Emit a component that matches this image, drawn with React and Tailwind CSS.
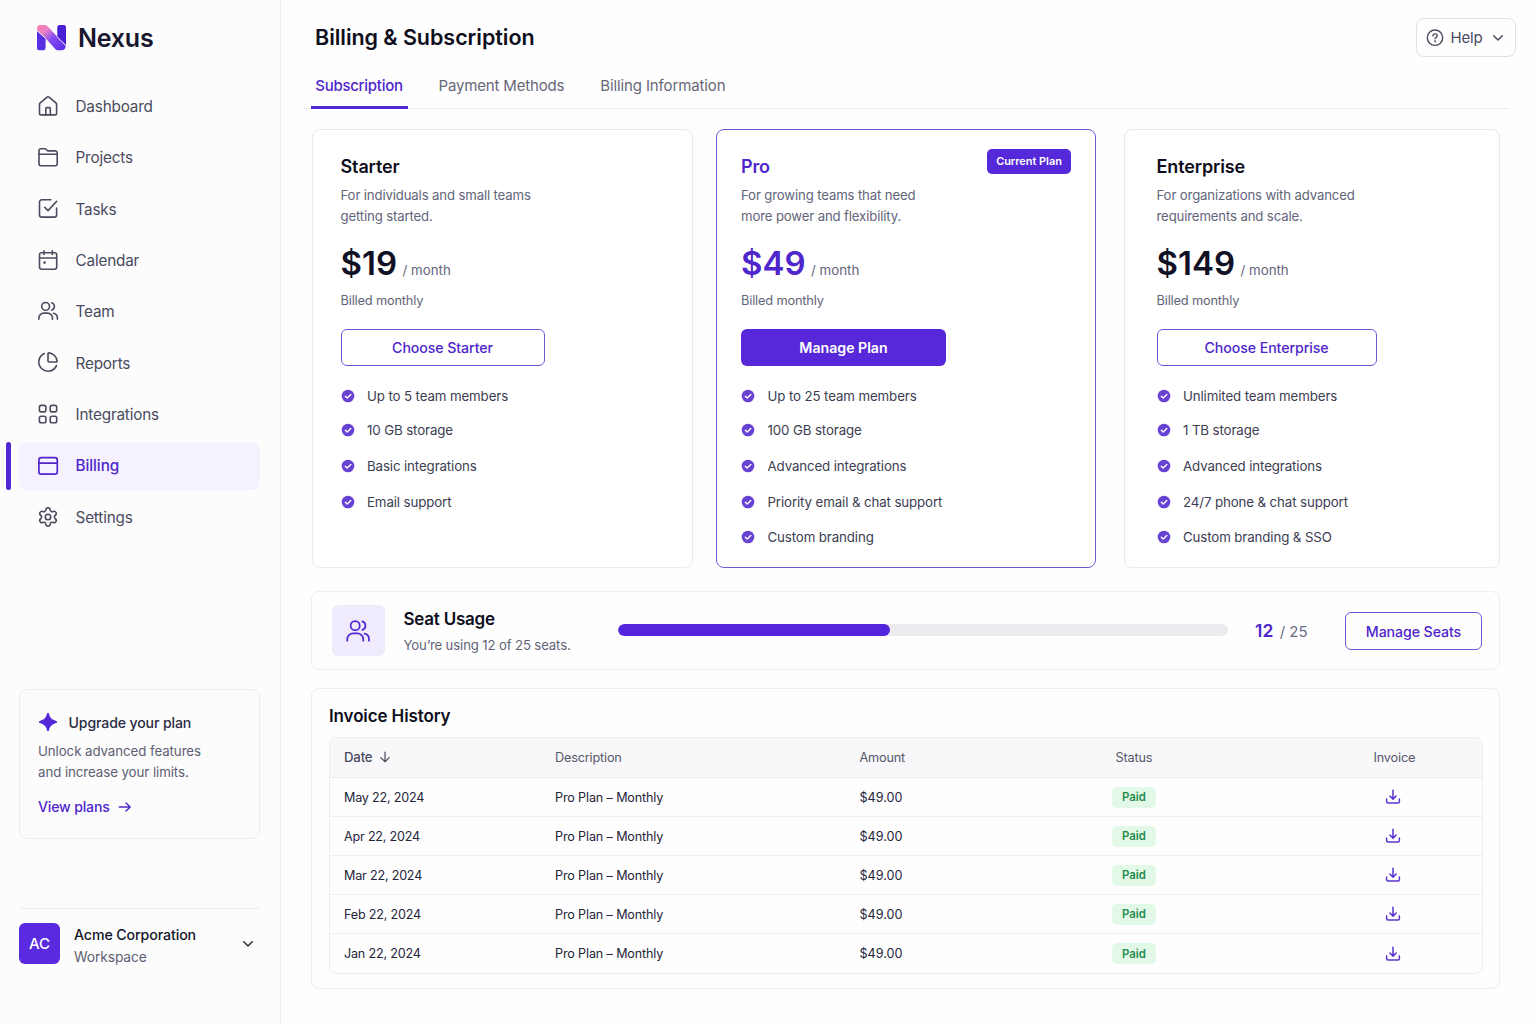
import React from "react";

function Icon({ children, size = 24, stroke = 1.6, className = "" }) {
  return (
    <svg
      width={size}
      height={size}
      viewBox="0 0 24 24"
      fill="none"
      stroke="currentColor"
      strokeWidth={stroke}
      strokeLinecap="round"
      strokeLinejoin="round"
      className={`shrink-0 ${className}`}
    >
      {children}
    </svg>
  );
}

const HomeIcon = () => (
  <Icon>
    <path d="M3.5 10.400c0-.6.25-1.100.7-1.500l6.600-5.600a1.900 1.900 0 0 1 2.500 0l6.600 5.600c.45.4.7.9.7 1.500v8.800a1.700 1.700 0 0 1-1.700 1.700H5.200a1.700 1.700 0 0 1-1.700-1.700z" />
    <path d="M9.800 20.700v-6.100a1 1 0 0 1 1-1h2.500a1 1 0 0 1 1 1v6.100" />
  </Icon>
);

const FolderIcon = () => (
  <Icon>
    <path d="M3 5.600A1.900 1.900 0 0 1 4.900 3.700h3.900c.5 0 1 .2 1.300.6l.9 1c.35.4.8.6 1.300.6h7a1.900 1.900 0 0 1 1.900 1.900v11a1.900 1.900 0 0 1-1.900 1.900H4.900A1.900 1.900 0 0 1 3 18.800z" />
    <path d="M3 9.300h18.200" />
  </Icon>
);

const TaskIcon = () => (
  <Icon>
    <path d="M14.800 3.800H5.700a2.200 2.200 0 0 0-2.200 2.200v12.900a2.200 2.200 0 0 0 2.200 2.200h12.700a2.200 2.200 0 0 0 2.200-2.200v-6.900" />
    <path d="m8.700 11.300 3.300 3.300L20.700 5.300" />
  </Icon>
);

const CalendarIcon = () => (
  <Icon>
    <rect x="3.500" y="4.700" width="17.200" height="16.500" rx="2.200" />
    <path d="M3.500 10h17.200M8 2.900v3.600M16.300 2.900v3.600" />
    <circle cx="8.600" cy="14.600" r=".5" fill="currentColor" />
  </Icon>
);

const TeamIcon = ({ size = 24, stroke = 1.6 }) => (
  <Icon size={size} stroke={stroke}>
    <circle cx="9.600" cy="7.400" r="3.900" />
    <path d="M2.800 20.300v-1.200a5 5 0 0 1 5-5h3.700a5 5 0 0 1 5 5v1.200" />
    <path d="M15.700 3.700a3.900 3.900 0 0 1 0 7.400" />
    <path d="M17.600 14.300a4.900 4.900 0 0 1 3.800 4.800v1.200" />
  </Icon>
);

const PieIcon = () => (
  <Icon size={22} stroke={1.75}>
    <path d="M21 12c.552 0 1.005-.449.95-.998a10 10 0 0 0-8.953-8.951c-.55-.055-.998.398-.998.95v8a1 1 0 0 0 1 1z" />
    <path d="M21.210 15.890A10 10 0 1 1 8 2.830" />
  </Icon>
);

const GridIcon = () => (
  <Icon>
    <rect x="3.400" y="3.400" width="6.500" height="6.500" rx="1.800" />
    <rect x="14.200" y="3.400" width="6.500" height="6.500" rx="1.800" />
    <rect x="3.400" y="14.200" width="6.500" height="6.500" rx="1.800" />
    <rect x="14.200" y="14.200" width="6.500" height="6.500" rx="1.800" />
  </Icon>
);

const CardIcon = () => (
  <Icon stroke={1.7}>
    <rect x="2.900" y="4.700" width="18.400" height="16.500" rx="2.400" />
    <path d="M2.900 10.100h18.400" />
  </Icon>
);

const GearIcon = () => (
  <Icon size={22} stroke={1.75} className="mt-0.5">
    <path d="M9.671 4.136a2.340 2.340 0 0 1 4.659 0 2.340 2.340 0 0 0 3.319 1.915 2.340 2.340 0 0 1 2.330 4.033 2.340 2.340 0 0 0 0 3.831 2.340 2.340 0 0 1-2.330 4.033 2.340 2.340 0 0 0-3.319 1.915 2.340 2.340 0 0 1-4.659 0 2.340 2.340 0 0 0-3.320-1.915 2.340 2.340 0 0 1-2.330-4.033 2.340 2.340 0 0 0 0-3.831A2.340 2.340 0 0 1 6.350 6.051a2.340 2.340 0 0 0 3.319-1.915" />
    <circle cx="12" cy="12" r="3" />
  </Icon>
);

const Chevron = ({ className = "" }) => (
  <svg width="12" height="8" viewBox="0 0 12 8" fill="none" stroke="currentColor" strokeWidth="1.500" strokeLinecap="round" strokeLinejoin="round" className={`shrink-0 ${className}`}>
    <path d="M1.700 1.800 6 6l4.300-4.200" />
  </svg>
);

const DownloadIcon = () => (
  <svg width="16" height="16" viewBox="0 0 16 16" fill="none" stroke="currentColor" strokeWidth="1.500" strokeLinecap="round" strokeLinejoin="round">
    <path d="M8 1.200v8.800M4.900 7 8 10.100 11.100 7M1.600 10v2.600c0 .9.600 1.500 1.500 1.500h9.800c.9 0 1.500-.6 1.500-1.500V10" />
  </svg>
);

const CheckIcon = () => (
  <svg width="14" height="14" viewBox="0 0 14 14" fill="none" className="-mt-px shrink-0">
    <circle cx="7" cy="7" r="6.300" fill="#6842d3" />
    <path d="m4.300 7.300 1.900 1.800 3.600-3.700" stroke="#fff" strokeWidth="1.400" strokeLinecap="round" strokeLinejoin="round" />
  </svg>
);

const Logo = () => (
  <svg width="30" height="26" viewBox="0 0 30 26">
    <defs>
      <linearGradient id="diag" x1="2" y1="1" x2="26" y2="25" gradientUnits="userSpaceOnUse">
        <stop offset="0" stopColor="#fb7fae" />
        <stop offset=".24" stopColor="#e880c4" />
        <stop offset=".52" stopColor="#8a4df0" />
        <stop offset="1" stopColor="#5a2be6" />
      </linearGradient>
    </defs>
    <path d="M0 5.600 8.600 13.200V23a2.300 2.300 0 0 1-2.300 2.300H2.300A2.300 2.300 0 0 1 0 23z" fill="#5630e2" />
    <path d="M20.300 2.300A2.300 2.300 0 0 1 22.600 0h4A2.300 2.300 0 0 1 29 2.300v18.200l-8.700-8.200z" fill="#4a1fd8" />
    <path d="M2.600 0h4.800c1.300 0 2.300.4 3.200 1.300L28.600 20.700c.3 2.700-1.200 4.600-3.900 4.600h-3.500c-1.300 0-2.300-.5-3.200-1.500L8.600 13.200.2 5.300C-.3 2.400.5 0 2.600 0z" fill="url(#diag)" />
    <path d="M-.2 5.400 8.800 13.500M20 11.700 29.200 21" stroke="#fcfcfe" strokeWidth=".9" />
  </svg>
);

const NAV = [
  { label: "Dashboard", icon: HomeIcon },
  { label: "Projects", icon: FolderIcon },
  { label: "Tasks", icon: TaskIcon },
  { label: "Calendar", icon: CalendarIcon },
  { label: "Team", icon: TeamIcon },
  { label: "Reports", icon: PieIcon },
  { label: "Integrations", icon: GridIcon },
  { label: "Billing", icon: CardIcon, active: true },
  { label: "Settings", icon: GearIcon },
];

function Sidebar() {
  return (
    <aside className="flex w-[281px] shrink-0 flex-col border-r border-[#ececf1] bg-[#fcfcfd] pl-[19px] pr-5">
      <div className="mt-[18px] flex h-10 items-center gap-[11px] pl-[18px]">
        <Logo />
        <span className="pt-px text-[25px] font-semibold tracking-[-0.008em] text-[#17172e]">Nexus</span>
      </div>

      <nav className="mt-[24.5px] flex flex-col gap-[3.35px]">
        {NAV.map(({ label, icon: Glyph, active }) => (
          <a
            key={label}
            className={
              active
                ? "relative flex h-12 items-center rounded-lg bg-[#f5f1fe] pl-[17px] text-[15.3px] font-medium tracking-[-0.004em] text-[#4f26cc]"
                : "flex h-12 items-center pl-[17px] text-[15.3px] tracking-[-0.012em] text-[#4a4b5e]"
            }
          >
            {active && <span className="absolute -left-[13px] top-0 h-12 w-[5px] rounded-full bg-[#5227d6]" />}
            <span className="-mt-0.5 flex w-6 justify-center">
              <Glyph />
            </span>
            <span className="ml-[15.5px] pt-[2px]">{label}</span>
          </a>
        ))}
      </nav>

      <div className="mt-auto flex h-[150px] flex-col rounded-lg border border-[#ececf2] pl-[18px] pt-[23px]">
        <div className="flex h-5 items-center">
          <svg width="20" height="20" viewBox="0 0 20 20" className="-mt-0.5 -ml-[0.5px]" fill="#5227d6">
            <path d="M10 .8c.5 0 .8.4 1 1 .9 3.700 2.500 5.700 7.200 7.100.6.200 1 .6 1 1.100s-.4.900-1 1.100c-4.700 1.400-6.300 3.400-7.200 7.100-.2.600-.5 1-1 1s-.8-.4-1-1C8.100 14.500 6.500 12.500 1.800 11.100c-.6-.2-1-.6-1-1.100s.4-.9 1-1.100C6.500 7.500 8.100 5.500 9 1.800c.2-.6.500-1 1-1z" />
          </svg>
          <span className="ml-[11px] text-[14.1px] font-medium tracking-[-0.009em] text-[#2b2b42]">Upgrade your plan</span>
        </div>
        <p className="mt-[8px] text-[13.3px] leading-[21px] tracking-[-0.006em] text-[#5d5f73]">
          Unlock advanced features
          <br />
          and increase your limits.
        </p>
        <a className="mt-[14px] flex h-5 items-center text-[14.1px] font-medium tracking-[-0.012em] text-[#4f26cc]">
          View plans
          <svg width="14" height="12" viewBox="0 0 14 12" fill="none" stroke="currentColor" strokeWidth="1.400" strokeLinecap="round" strokeLinejoin="round" className="ml-[8px]">
            <path d="M1.300 6h10.800M8 1.900 12.200 6 8 10.100" />
          </svg>
        </a>
      </div>

      <div className="mb-[60px] mt-[69px] flex h-[56px] items-center border-t border-[#ececf1] pt-[13px]">
        <div className="flex h-[41px] w-[41px] items-center justify-center rounded-md bg-[#5a2ae0] pt-[2px] text-[15px] font-medium text-white">AC</div>
        <div className="ml-[14px] flex flex-col pt-[6px]">
          <span className="h-[22px] text-[14.2px] font-medium leading-[22px] tracking-[-0.008em] text-[#14142a]">Acme Corporation</span>
          <span className="h-[22px] text-[13.8px] leading-[22px] tracking-[-0.008em] text-[#5d5f73]">Workspace</span>
        </div>
        <Chevron className="ml-auto mr-1.5 mt-0.5 text-[#2d2e44]" />
      </div>
    </aside>
  );
}

const ROW_HEIGHTS = ["h-[35px]", "h-[34px]", "h-[37px]", "h-[35px]", "h-[35px]"];

function Plan({ name, desc, price, cta, features, current, box, button }) {
  return (
    <section className={`flex h-[439px] flex-col rounded-lg border bg-white/60 ${current ? "border-[#7654d8]" : "border-[#e9e9ef]"} ${box}`}>
      <div className="flex justify-between">
        <div>
          <h2 className={`mt-[25px] h-6 text-[18px] font-semibold leading-6 tracking-[-0.007em] ${current ? "text-[#4f26cc]" : "text-[#0e0e1c]"}`}>{name}</h2>
          <p className="mt-[6px] text-[13.2px] leading-[21px] tracking-[-0.011em] text-[#62657a]">
            {desc[0]}
            <br />
            {desc[1]}
          </p>
        </div>
        {current && (
          <span className="mr-6 mt-[19px] flex h-[25px] w-[84px] items-center justify-center rounded-[5px] bg-[#5528d9] text-[11px] font-semibold tracking-[-0.005em] text-white">
            Current Plan
          </span>
        )}
      </div>
      <div className="mt-[16px] flex h-10 items-baseline">
        <span className={`text-[33px] font-semibold leading-10 ${current ? "text-[#4f26cc]" : "text-[#111126]"}`}>{price}</span>
        <span className="ml-[5.5px] text-[13.3px] text-[#62657a]">/ month</span>
      </div>
      <p className="mt-[8px] h-5 text-[12.8px] leading-5 tracking-[-0.013em] text-[#62657a]">Billed monthly</p>
      <button
        className={`mt-[18px] flex h-[37px] items-center justify-center rounded-[6px] text-[14.2px] ${button} ${
          current ? "bg-[#5728d9] font-semibold tracking-[-0.002em] text-white" : "border border-[#7654d8] font-medium tracking-[-0.007em] text-[#4f26cc]"
        }`}
      >
        {cta}
      </button>
      <ul className="mt-[12.5px]">
        {features.map((f, i) => (
          <li key={f} className={`flex items-center gap-[12.5px] text-[13.3px] tracking-[-0.009em] text-[#3c3d52] ${ROW_HEIGHTS[i]}`}>
            <CheckIcon />
            <span className="pt-px">{f}</span>
          </li>
        ))}
      </ul>
    </section>
  );
}

function Plans() {
  return (
    <div className="mt-5 flex pl-[31px]">
      <Plan
        name="Starter"
        desc={["For individuals and small teams", "getting started."]}
        price="$19"
        cta="Choose Starter"
        features={["Up to 5 team members", "10 GB storage", "Basic integrations", "Email support"]}
        box="w-[381px] pl-[27.5px]"
        button="w-[204px]"
      />
      <Plan
        name="Pro"
        desc={["For growing teams that need", "more power and flexibility."]}
        price="$49"
        cta="Manage Plan"
        features={["Up to 25 team members", "100 GB storage", "Advanced integrations", "Priority email & chat support", "Custom branding"]}
        current
        box="ml-[23px] w-[380px] pl-[24px]"
        button="w-[205px]"
      />
      <Plan
        name="Enterprise"
        desc={["For organizations with advanced", "requirements and scale."]}
        price="$149"
        cta="Choose Enterprise"
        features={["Unlimited team members", "1 TB storage", "Advanced integrations", "24/7 phone & chat support", "Custom branding & SSO"]}
        box="ml-[28px] w-[376px] pl-[31.5px]"
        button="w-[220px]"
      />
    </div>
  );
}

function SeatUsage() {
  return (
    <section className="ml-[30px] mt-[23px] flex h-[79px] w-[1189px] items-center rounded-lg border border-[#eeeef3] pl-[20px]">
      <div className="flex h-[51px] w-[53px] items-center justify-center rounded-md bg-[#f0eafd] pr-[2px] text-[#5227d6]">
        <TeamIcon size={28} stroke={1.5} />
      </div>
      <div className="ml-[18.5px] w-[214.5px] pt-[2px]">
        <h2 className="h-6 text-[17px] font-semibold leading-6 tracking-[-0.014em] text-[#0e0e1c]">Seat Usage</h2>
        <p className="mt-[2px] h-6 text-[13.2px] leading-6 tracking-[-0.011em] text-[#62657a]">You’re using 12 of 25 seats.</p>
      </div>
      <div className="-mt-px h-[12px] w-[610px] overflow-hidden rounded-full bg-[#ececf0]">
        <div className="h-full w-[272px] rounded-full bg-[#5325dd]" />
      </div>
      <div className="ml-[27px] flex w-[90px] items-baseline pt-[2px]">
        <span className="text-[17.5px] font-semibold tracking-[0.01em] text-[#4f26cc]">12</span>
        <span className="ml-[6px] text-[15px] text-[#6c6f82]">/ 25</span>
      </div>
      <button className="flex h-[38px] w-[137px] items-center justify-center rounded-md border border-[#7654d8] pt-[2px] text-[14.2px] font-medium tracking-[-0.007em] text-[#4f26cc]">
        Manage Seats
      </button>
    </section>
  );
}

const DATES = ["May 22, 2024", "Apr 22, 2024", "Mar 22, 2024", "Feb 22, 2024", "Jan 22, 2024"];

function Invoices() {
  return (
    <section className="ml-[30px] mt-[18px] h-[301px] w-[1189px] rounded-lg border border-[#ececf1] px-[16.5px]">
      <h2 className="mt-[15px] h-6 pl-[0.5px] text-[17px] font-semibold leading-6 tracking-[-0.007em] text-[#0e0e1c]">Invoice History</h2>
      <div className="mt-[9px] w-[1154.5px] overflow-hidden rounded-lg border border-[#ececf1]">
        <div className="grid h-10 grid-cols-[211px_304px_253px_261px_1fr] items-center border-b border-[#ececf1] bg-[#f8f8fa] pl-[14.5px] text-[12.7px] tracking-[-0.014em] text-[#55576a]">
          <span className="flex items-center text-[13.2px] font-medium text-[#4a4b5e]">
            Date
            <svg width="12" height="12" viewBox="0 0 12 12" fill="none" stroke="currentColor" strokeWidth="1.200" strokeLinecap="round" strokeLinejoin="round" className="ml-[7px]">
              <path d="M6 1v9.500M1.800 6.600 6 10.700l4.200-4.100" />
            </svg>
          </span>
          <span>Description</span>
          <span className="pl-[0.5px]">Amount</span>
          <span className="pl-[3.5px]">Status</span>
          <span className="pl-[0.5px]">Invoice</span>
        </div>
        {DATES.map((d) => (
          <div
            key={d}
            className="grid h-[39px] grid-cols-[211px_304px_253px_261px_1fr] items-center border-b border-[#f0f0f4] pl-[14.5px] text-[12.6px] text-[#24253a] last:border-b-0"
          >
            <span className="pt-[2px] tracking-[-0.016em]">{d}</span>
            <span className="pt-[2px] tracking-[-0.011em]">Pro Plan – Monthly</span>
            <span className="pl-[0.5px] pt-[2px]">$49.00</span>
            <span className="flex h-[21px] w-[44px] items-center justify-center rounded-[5px] bg-[#e3f9e8] pt-[2px] text-[11.4px] font-semibold text-[#1f8a4c]">Paid</span>
            <span className="pl-[11.5px] text-[#5a33d0]">
              <DownloadIcon />
            </span>
          </div>
        ))}
      </div>
    </section>
  );
}

export default function App() {
  return (
    <div className="flex h-[1024px] w-[1536px] overflow-hidden bg-[#fefefe] font-['Inter',sans-serif]">
      <Sidebar />
      <main className="flex-1">
        <header className="flex justify-between pl-[34px] pr-5">
          <h1 className="mt-[21px] h-8 text-[21.5px] font-semibold leading-8 tracking-[-0.002em] text-[#0e0e1c]">Billing & Subscription</h1>
          <button className="mt-[18px] flex h-[39px] w-[100px] items-center rounded-lg border border-[#e0e0e7] pl-[8.5px] text-[15px] tracking-[-0.012em] text-[#4a4b5e]">
            <svg width="18" height="18" viewBox="0 0 18 18" fill="none" stroke="currentColor" strokeWidth="1.400" strokeLinecap="round" strokeLinejoin="round">
              <circle cx="9" cy="8.700" r="7.700" />
              <path d="M6.900 6.900c.1-1.200 1-2 2.200-2s2.100.8 2.100 1.900c0 1.500-2.100 1.700-2.100 3" />
              <circle cx="9.050" cy="12.300" r=".35" fill="currentColor" />
            </svg>
            <span className="ml-[7px] pt-px">Help</span>
            <Chevron className="ml-[9px]" />
          </button>
        </header>

        <div className="ml-[22px] flex h-[52px] w-[1206px] items-stretch border-b border-[#ececf1] pl-[8px] text-[15px] text-[#666878]">
          <a className="-mb-px flex w-[97px] items-center justify-center border-b-[3px] border-[#5227d6] pr-px pt-[10px] font-medium tracking-[-0.019em] text-[#4f26cc]">Subscription</a>
          <a className="ml-[30.5px] flex items-center pt-[8px] tracking-[-0.011em]">Payment Methods</a>
          <a className="ml-[36px] flex items-center pt-[8px] tracking-[-0.008em]">Billing Information</a>
        </div>

        <Plans />
        <SeatUsage />
        <Invoices />
      </main>
    </div>
  );
}
